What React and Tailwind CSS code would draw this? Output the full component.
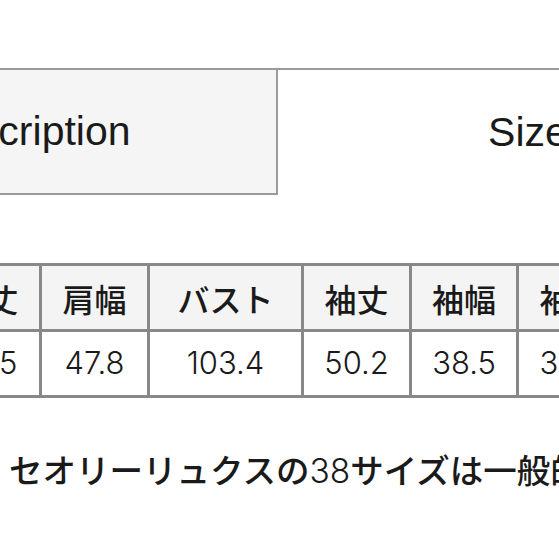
export default function App() {
  const heads = ['着丈', '肩幅', 'バスト', '袖丈', '袖幅', '袖口'];
  const values = ['70.5', '47.8', '103.4', '50.2', '38.5', '30.5'];

  return (
    <div className="h-[559px] w-[559px] overflow-hidden bg-white pt-[68px] text-[#1a1a1a] [font-family:'Liberation_Sans','Noto_Sans_CJK_JP',sans-serif]">
      {/* Tabs */}
      <div className="ml-[-222px] flex w-[1000px]">
        <div className="flex h-[127px] w-[500px] shrink-0 items-center justify-center border-2 border-[#9a9a9a] bg-[#f5f5f5] text-[41px]">
          Description
        </div>
        <div className="flex h-[127px] w-[500px] shrink-0 items-center justify-center border-t-2 border-[#9a9a9a] bg-white text-[41px]">
          Size
        </div>
      </div>

      {/* Size table */}
      <div className="ml-[-69px] mt-[68px] grid w-[696px] grid-cols-[105px_105px_151px_105px_104px_105px] gap-[3px] bg-[#888888] p-[3px]">
        {heads.map((h) => (
          <div
            key={h}
            className="flex h-[63px] items-center justify-center bg-[#f4f4f4] text-[32px] font-medium [font-family:'Noto_Sans_CJK_JP',sans-serif]"
          >
            {h}
          </div>
        ))}
        {values.map((v, i) => (
          <div
            key={i}
            className="flex h-[63px] items-center justify-center bg-white text-[31px] font-light [font-family:Inter,'Liberation_Sans',sans-serif]"
          >
            {v}
          </div>
        ))}
      </div>

      {/* Note */}
      <p className="mt-[48px] whitespace-nowrap pl-[9px] text-[33.5px] font-medium leading-[46px] [font-family:'Noto_Sans_CJK_JP',sans-serif]">
        セオリーリュクスの<span className="font-light [font-family:Inter,sans-serif]">38</span>サイズは一般的なMサイズです
      </p>
    </div>
  );
}
